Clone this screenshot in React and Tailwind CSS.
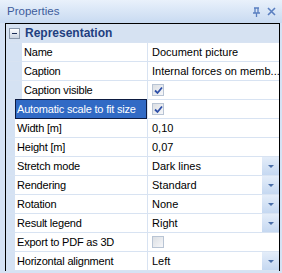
import React from "react";

const font = { fontFamily: '"Liberation Sans", Arial, sans-serif' };

const rows = [
  { name: "Name", value: "Document picture", nested: true },
  { name: "Caption", value: "Internal forces on memb...", nested: true },
  { name: "Caption visible", check: true, nested: true },
  { name: "Automatic scale to fit size", check: true, selected: true },
  { name: "Width [m]", value: "0,10" },
  { name: "Height [m]", value: "0,07" },
  { name: "Stretch mode", value: "Dark lines", drop: true },
  { name: "Rendering", value: "Standard", drop: true },
  { name: "Rotation", value: "None", drop: true },
  { name: "Result legend", value: "Right", drop: true },
  { name: "Export to PDF as 3D", check: false },
  { name: "Horizontal alignment", value: "Left", drop: true },
];

function CheckBox({ checked }) {
  return (
    <div className="w-[12px] h-[12px] border border-[#b8c4d4] bg-gradient-to-br from-[#dcdfe4] to-[#f6f7f9] flex items-center justify-center">
      {checked && (
        <svg width="9" height="9" viewBox="0 0 9 9">
          <path d="M1 4.5 L3.5 7 L8 1.5" stroke="#2e4fa8" strokeWidth="1.8" fill="none" />
        </svg>
      )}
    </div>
  );
}

function DropButton() {
  return (
    <div className="w-[17px] h-[18px] bg-gradient-to-b from-[#e4edf9] to-[#c5d8f1] flex items-center justify-center">
      <svg width="6" height="3" viewBox="0 0 6 3">
        <path d="M0 0 H6 L3 3 Z" fill="#4a6ea8" />
      </svg>
    </div>
  );
}

function Row({ row }) {
  return (
    <div className="flex h-[19px] border-b border-[#d8e3f2]">
      <div className={row.nested ? "w-[16px] bg-[#d5e2f3]" : "w-[9px] bg-[#d5e2f3]"} />
      <div
        className={
          row.selected
            ? "flex-1 flex items-center pl-[1px] bg-[#316ac5] text-white border border-[#0c1a40] -mt-[1px] h-[20px]"
            : "flex-1 flex items-center pl-[2px] bg-white text-black"
        }
      >
        <span className="whitespace-nowrap tracking-[-0.2px]">{row.name}</span>
      </div>
      <div className="w-[1px] bg-[#d8e3f2]" />
      <div className="w-[131px] flex items-center bg-white">
        {row.value !== undefined && (
          <span className="flex-1 pl-[4px] whitespace-nowrap overflow-hidden">{row.value}</span>
        )}
        {row.check !== undefined && (
          <div className="pl-[4px]">
            <CheckBox checked={row.check} />
          </div>
        )}
        {row.drop && <DropButton />}
      </div>
    </div>
  );
}

export default function App() {
  return (
    <div
      className="w-[282px] h-[273px] bg-[#d5e2f4] overflow-hidden text-[11px] text-black"
      style={font}
    >
      <div className="h-[23px] flex items-center justify-between pl-[7px] pr-[6px] bg-gradient-to-b from-[#e9f1fb] to-[#c8daf1]">
        <span className="text-[11.5px] text-[#3e5c9c]">Properties</span>
        <div className="flex items-center gap-[6px]">
          <svg width="9" height="10" viewBox="0 0 9 10">
            <path d="M2 1 H7 M3 1 V6 M6 1 V6 M1 6 H8 M4.5 6 V10" stroke="#5a7fc0" strokeWidth="1.3" fill="none" />
          </svg>
          <svg width="9" height="9" viewBox="0 0 9 9">
            <path d="M1 1 L8 8 M8 1 L1 8" stroke="#5a7fc0" strokeWidth="1.6" />
          </svg>
        </div>
      </div>
      <div className="ml-[5px] w-[275px] border-l border-r border-t border-black bg-white">
        <div className="h-[19px] flex items-center bg-[#d6e2f2] border-b border-[#d8e3f2]">
          <div className="ml-[3px] w-[11px] h-[11px] border border-[#8a98ab] bg-gradient-to-b from-white to-[#c9d3e0] flex items-center justify-center">
            <div className="w-[5px] h-[1px] bg-[#1c2c55]" />
          </div>
          <span className="ml-[5px] font-bold text-[12px] text-[#1f3f7f]">Representation</span>
        </div>
        {rows.map((r) => (
          <Row key={r.name} row={r} />
        ))}
      </div>
    </div>
  );
}
